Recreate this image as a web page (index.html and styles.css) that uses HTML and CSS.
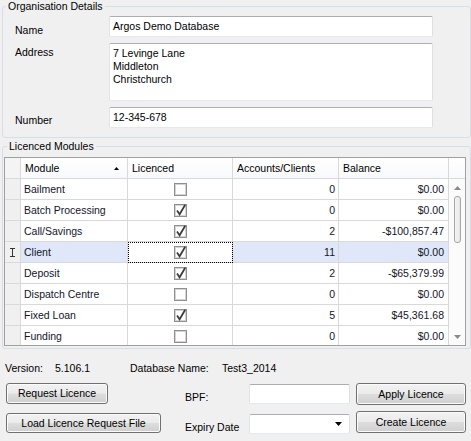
FILE: index.html
```html
<!DOCTYPE html>
<html>
<head>
<meta charset="utf-8">
<link rel="stylesheet" href="styles.css">
</head>
<body>
<div class="window">
  <fieldset class="group org">
    <legend>Organisation Details</legend>
    <div class="field f-name"><span class="lbl">Name</span><div class="tb">Argos Demo Database</div></div>
    <div class="field f-addr"><span class="lbl">Address</span><div class="tb ta">7 Levinge Lane<br>Middleton<br>Christchurch</div></div>
    <div class="field f-num"><span class="lbl">Number</span><div class="tb">12-345-678</div></div>
  </fieldset>

  <fieldset class="group mods">
    <legend>Licenced Modules</legend>
    <div class="dgv">
      <div class="hrow">
        <div class="c rh"></div>
        <div class="c hc sortc"><span>Module</span><svg class="sort" width="5" height="3" viewBox="0 0 5 3"><polygon points="2.5,0 5,3 0,3" fill="#000"/></svg></div>
        <div class="c hc">Licenced</div>
        <div class="c hc">Accounts/Clients</div>
        <div class="c hc">Balance</div>
        <div class="c hc last"></div>
      </div>
      <div class="gbody">
        <div class="rows">
          <div class="row"><div class="c rh"></div><div class="c">Bailment</div><div class="c cbc"><svg class="cb" width="13" height="13" viewBox="0 0 13 13"><rect x="0.5" y="0.5" width="12" height="12" fill="#f2f2f2" stroke="#8e8f8f"/><rect x="1.5" y="1.5" width="10" height="10" fill="#fdfdfd" stroke="#d4d4d4"/></svg></div><div class="c num">0</div><div class="c num bal">$0.00</div></div>
          <div class="row"><div class="c rh"></div><div class="c">Batch Processing</div><div class="c cbc"><svg class="cb" width="13" height="13" viewBox="0 0 13 13"><rect x="0.5" y="0.5" width="12" height="12" fill="#f2f2f2" stroke="#8e8f8f"/><rect x="1.5" y="1.5" width="10" height="10" fill="#fdfdfd" stroke="#d4d4d4"/><path d="M3 6.5 L5.6 10.3 L11.2 0.8" fill="none" stroke="#3a3a3a" stroke-width="1.7"/></svg></div><div class="c num">0</div><div class="c num bal">$0.00</div></div>
          <div class="row"><div class="c rh"></div><div class="c">Call/Savings</div><div class="c cbc"><svg class="cb" width="13" height="13" viewBox="0 0 13 13"><rect x="0.5" y="0.5" width="12" height="12" fill="#f2f2f2" stroke="#8e8f8f"/><rect x="1.5" y="1.5" width="10" height="10" fill="#fdfdfd" stroke="#d4d4d4"/><path d="M3 6.5 L5.6 10.3 L11.2 0.8" fill="none" stroke="#3a3a3a" stroke-width="1.7"/></svg></div><div class="c num">2</div><div class="c num bal">-$100,857.47</div></div>
          <div class="row sel"><div class="c rh"><svg class="ibeam" width="5" height="9" viewBox="0 0 5 9"><path d="M0 0.5 H5 M2.5 0.5 V8.5 M0 8.5 H5" fill="none" stroke="#333" stroke-width="1"/></svg></div><div class="c">Client</div><div class="c cbc focus"><svg class="cb" width="13" height="13" viewBox="0 0 13 13"><rect x="0.5" y="0.5" width="12" height="12" fill="#f2f2f2" stroke="#8e8f8f"/><rect x="1.5" y="1.5" width="10" height="10" fill="#fdfdfd" stroke="#d4d4d4"/><path d="M3 6.5 L5.6 10.3 L11.2 0.8" fill="none" stroke="#3a3a3a" stroke-width="1.7"/></svg></div><div class="c num">11</div><div class="c num bal">$0.00</div></div>
          <div class="row"><div class="c rh"></div><div class="c">Deposit</div><div class="c cbc"><svg class="cb" width="13" height="13" viewBox="0 0 13 13"><rect x="0.5" y="0.5" width="12" height="12" fill="#f2f2f2" stroke="#8e8f8f"/><rect x="1.5" y="1.5" width="10" height="10" fill="#fdfdfd" stroke="#d4d4d4"/><path d="M3 6.5 L5.6 10.3 L11.2 0.8" fill="none" stroke="#3a3a3a" stroke-width="1.7"/></svg></div><div class="c num">2</div><div class="c num bal">-$65,379.99</div></div>
          <div class="row"><div class="c rh"></div><div class="c">Dispatch Centre</div><div class="c cbc"><svg class="cb" width="13" height="13" viewBox="0 0 13 13"><rect x="0.5" y="0.5" width="12" height="12" fill="#f2f2f2" stroke="#8e8f8f"/><rect x="1.5" y="1.5" width="10" height="10" fill="#fdfdfd" stroke="#d4d4d4"/></svg></div><div class="c num">0</div><div class="c num bal">$0.00</div></div>
          <div class="row"><div class="c rh"></div><div class="c">Fixed Loan</div><div class="c cbc"><svg class="cb" width="13" height="13" viewBox="0 0 13 13"><rect x="0.5" y="0.5" width="12" height="12" fill="#f2f2f2" stroke="#8e8f8f"/><rect x="1.5" y="1.5" width="10" height="10" fill="#fdfdfd" stroke="#d4d4d4"/><path d="M3 6.5 L5.6 10.3 L11.2 0.8" fill="none" stroke="#3a3a3a" stroke-width="1.7"/></svg></div><div class="c num">5</div><div class="c num bal">$45,361.68</div></div>
          <div class="row"><div class="c rh"></div><div class="c">Funding</div><div class="c cbc"><svg class="cb" width="13" height="13" viewBox="0 0 13 13"><rect x="0.5" y="0.5" width="12" height="12" fill="#f2f2f2" stroke="#8e8f8f"/><rect x="1.5" y="1.5" width="10" height="10" fill="#fdfdfd" stroke="#d4d4d4"/></svg></div><div class="c num">0</div><div class="c num bal">$0.00</div></div>
        </div>
        <div class="vscroll">
          <div class="sbtn"><svg width="7" height="4" viewBox="0 0 7 4"><polygon points="3.5,0 7,4 0,4" fill="#8a8a8a"/></svg></div>
          <div class="thumb"></div>
          <div class="sfill"></div>
          <div class="sbtn"><svg width="7" height="4" viewBox="0 0 7 4"><polygon points="0,0 7,0 3.5,4" fill="#8a8a8a"/></svg></div>
        </div>
      </div>
    </div>
  </fieldset>

  <div class="info">
    <span class="i1">Version:</span><span class="i2">5.106.1</span><span class="i3">Database Name:</span><span>Test3_2014</span>
  </div>

  <div class="actions">
    <button class="btn b-req">Request Licence</button>
    <span class="alabel l-bpf">BPF:</span>
    <div class="tb small t-bpf"></div>
    <button class="btn b-apply">Apply Licence</button>

    <button class="btn b-load">Load Licence Request File</button>
    <span class="alabel l-exp">Expiry Date</span>
    <div class="tb small combo"><svg width="7" height="4" viewBox="0 0 7 4"><polygon points="0,0 7,0 3.5,4" fill="#000"/></svg></div>
    <button class="btn b-create">Create Licence</button>
  </div>
</div>
</body>
</html>
```

FILE: styles.css
```css
body {
  margin: 0;
  background: #f0f0f0;
  font-family: "Liberation Sans", Arial, sans-serif;
  font-size: 10.5px;
  color: #000;
}

.window {
  width: 471px;
  height: 441px;
  overflow: hidden;
}

/* group boxes */
.group {
  box-sizing: border-box;
  width: 469px;
  margin: 0 0 0 2px;
  border: 1px solid #d5dfe5;
  border-radius: 3px;
  min-width: 0;
}

.group legend {
  margin-left: 3px;
  padding: 0 2px;
  line-height: 13px;
  font-size: 10.5px;
}

.org {
  padding: 0 0 9px 0;
}

.mods {
  margin-top: 2px;
  padding: 0 0 2px 1px;
}

/* form fields */
.field {
  display: flex;
  margin-top: 6px;
}

.f-name {
  margin-top: 3px;
}

.lbl {
  display: block;
  width: 94px;
  margin-left: 12px;
  line-height: 13px;
}

.f-name .lbl { padding-top: 8px; }
.f-addr .lbl { padding-top: 3px; }
.f-num .lbl { padding-top: 7px; }

.tb {
  box-sizing: border-box;
  width: 324px;
  height: 21px;
  border: 1px solid;
  border-color: #abadb3 #dbdfe6 #e3e9ef #e2e3ea;
  border-radius: 2px;
  background: #fff;
  padding: 0 3px;
  line-height: 19px;
  white-space: nowrap;
}

.ta {
  height: 58px;
  line-height: 13px;
  padding-top: 3px;
}

/* data grid */
.dgv {
  box-sizing: border-box;
  width: 462px;
  height: 189px;
  margin-top: 4px;
  border: 1px solid #a0a0a0;
  background: #fff;
  overflow: hidden;
  color: #14142a;
}

.hrow,
.row {
  display: grid;
  height: 21px;
}

.hrow {
  grid-template-columns: 16px 107px 105px 106px 110px 16px;
  background: linear-gradient(#ffffff, #f8f9fb);
  color: #000;
}

.row {
  grid-template-columns: 16px 107px 105px 106px 110px;
}

.c {
  box-sizing: border-box;
  border-right: 1px solid #d9d9d9;
  border-bottom: 1px solid #d9d9d9;
  padding: 0 3px;
  line-height: 20px;
  white-space: nowrap;
  overflow: hidden;
}

.hc {
  padding-left: 4px;
}

.hc.last {
  border-right: none;
}

.sortc {
  display: flex;
  align-items: center;
  justify-content: space-between;
  padding-right: 8px;
}

.rh {
  background: #f0f0f0;
  padding: 0;
  display: flex;
  align-items: center;
  justify-content: center;
}

.hrow .rh {
  background: #f4f4f4;
}

.gbody {
  display: flex;
  height: 166px;
  overflow: hidden;
}

.rows {
  width: 444px;
}

.num {
  text-align: right;
}

.bal {
  padding-right: 4px;
}

.cbc {
  display: flex;
  align-items: center;
  justify-content: center;
}

.cb {
  overflow: visible;
  display: block;
}

.sel .c {
  background: #dfe7f8;
}

.sel .rh {
  background: #f0f0f0;
}

.sel .focus {
  background: #fff;
  outline: 1px dotted #000;
  outline-offset: -1px;
}

.ibeam {
  display: block;
}

/* scrollbar */
.vscroll {
  width: 16px;
  display: flex;
  flex-direction: column;
  background: #fbfbfb;
}

.sbtn {
  height: 17px;
  display: flex;
  align-items: center;
  justify-content: center;
}

.thumb {
  box-sizing: border-box;
  width: 7px;
  height: 47px;
  margin: 0 auto;
  border: 1px solid #a6a6a6;
  border-radius: 3px;
  background: linear-gradient(90deg, #f4f4f4, #e6e6e6);
}

.sfill {
  flex: 1;
}

/* info line */
.info {
  display: flex;
  margin: 13px 0 0 5px;
  line-height: 13px;
}

.i1 { width: 50px; }
.i2 { width: 75px; }
.i3 { width: 92px; }

/* action area */
.actions {
  display: grid;
  grid-template-columns: 179px 64px 107px 110px;
  grid-template-rows: 21px 21px;
  row-gap: 8px;
  margin: 8px 0 0 6px;
}

.btn {
  box-sizing: border-box;
  height: 21px;
  margin: 0;
  padding: 0;
  border: 1px solid #707070;
  border-radius: 3px;
  background: linear-gradient(#f2f2f2 0%, #ebebeb 48%, #dddddd 52%, #cfcfcf 100%);
  box-shadow: inset 0 0 0 1px #fbfbfb;
  font-family: "Liberation Sans", Arial, sans-serif;
  font-size: 10.5px;
  color: #000;
  line-height: 19px;
  text-align: center;
  align-self: start;
}

.b-req { width: 102px; }
.b-load { width: 155px; height: 20px; line-height: 18px; margin-top: 1px; }
.b-apply { width: 110px; height: 22px; }
.b-create { width: 110px; height: 22px; margin-top: -1px; }

.alabel {
  line-height: 13px;
  align-self: start;
}

.l-bpf { margin-top: 8px; }
.l-exp { margin-top: 9px; }

.tb.small {
  width: 101px;
  height: 20px;
  align-self: start;
}

.t-bpf { margin-top: 1px; }

.combo {
  margin-top: 2px;
  display: flex;
  align-items: center;
  justify-content: flex-end;
  padding-right: 7px;
}

.combo svg {
  display: block;
}
```
